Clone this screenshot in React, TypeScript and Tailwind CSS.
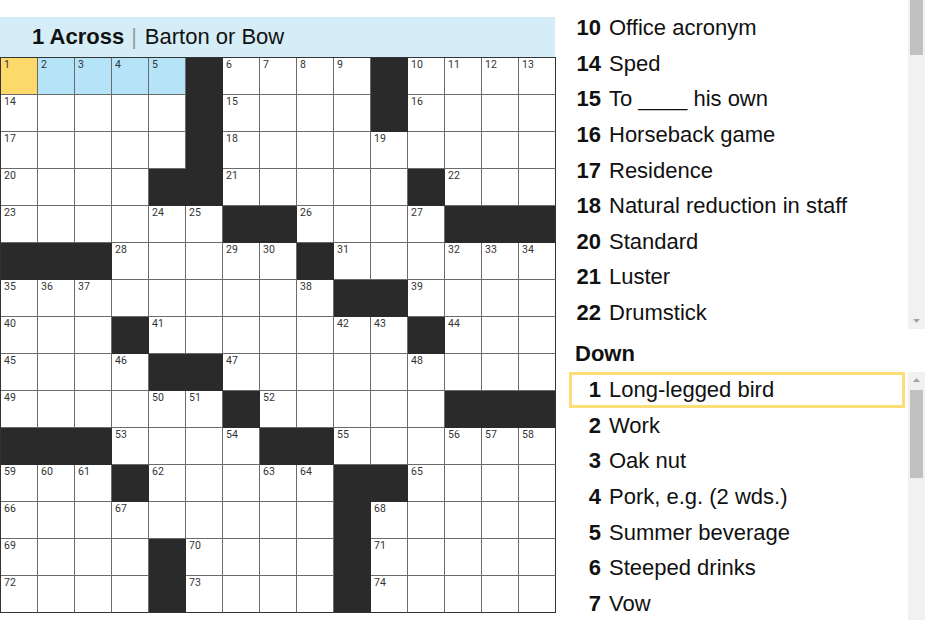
import React from 'react';

// 15x15 layout, '#' marks a block
const LAYOUT = [
  '.....#....#....',
  '.....#....#....',
  '.....#.........',
  '....##.....#...',
  '......##....###',
  '###.....#......',
  '.........##....',
  '...#.......#...',
  '....##.........',
  '......#.....###',
  '###....##......',
  '...#.....##....',
  '.........#.....',
  '....#....#.....',
  '....#....#.....',
];

type Cell = { block: boolean; num: number | null };

const buildGrid = (): Cell[][] => {
  let n = 0;
  return LAYOUT.map((row, r) =>
    row.split('').map((ch, c) => {
      if (ch === '#') return { block: true, num: null };
      const white = (rr: number, cc: number) =>
        rr >= 0 && cc >= 0 && rr < 15 && cc < 15 && LAYOUT[rr][cc] !== '#';
      const across = !white(r, c - 1) && white(r, c + 1);
      const down = !white(r - 1, c) && white(r + 1, c);
      return { block: false, num: across || down ? ++n : null };
    })
  );
};

const GRID = buildGrid();

const ACROSS = [
  { num: 10, text: 'Office acronym' },
  { num: 14, text: 'Sped' },
  { num: 15, text: 'To ____ his own' },
  { num: 16, text: 'Horseback game' },
  { num: 17, text: 'Residence' },
  { num: 18, text: 'Natural reduction in staff' },
  { num: 20, text: 'Standard' },
  { num: 21, text: 'Luster' },
  { num: 22, text: 'Drumstick' },
];

const DOWN = [
  { num: 1, text: 'Long-legged bird' },
  { num: 2, text: 'Work' },
  { num: 3, text: 'Oak nut' },
  { num: 4, text: 'Pork, e.g. (2 wds.)' },
  { num: 5, text: 'Summer beverage' },
  { num: 6, text: 'Steeped drinks' },
  { num: 7, text: 'Vow' },
];

const cellClass = (cell: Cell, r: number, c: number) => {
  if (cell.block) return 'bg-[#2a2a2a] border-[#2a2a2a]';
  if (r === 0 && c === 0) return 'bg-[#fdd86b] border-[#6b6b6b]';
  if (r === 0 && c < 5) return 'bg-[#b5e3f8] border-[#6b6b6b]';
  return 'bg-white border-[#6b6b6b]';
};

const ClueRow: React.FC<{ num: number; text: string; active?: boolean }> = ({ num, text, active }) => (
  <div
    className={
      active
        ? 'ml-[9px] mr-[3px] h-[35.6px] flex items-center border-[3px] border-[#fcdd78]'
        : 'ml-[9px] mr-[3px] h-[35.6px] flex items-center border-[3px] border-transparent'
    }
  >
    <span className="w-[29px] shrink-0 text-right font-bold">{num}</span>
    <span className="ml-[8px] whitespace-nowrap">{text}</span>
  </div>
);

const Scrollbar: React.FC<{ up?: boolean; thumbTop: number; thumbHeight: number }> = ({ up, thumbTop, thumbHeight }) => (
  <div className="w-[17px] shrink-0 bg-[#f1f1f1] flex flex-col items-center">
    {up && (
      <svg width="17" height="17" viewBox="0 0 17 17" className="shrink-0">
        <path d="M5 10 L8.5 6 L12 10 Z" fill="#a3a3a3" />
      </svg>
    )}
    <div className="w-[13px] bg-[#c1c1c1] shrink-0" style={{ marginTop: thumbTop, height: thumbHeight }} />
    <div className="flex-1" />
    {!up && (
      <svg width="17" height="17" viewBox="0 0 17 17" className="shrink-0">
        <path d="M5 7 L12 7 L8.5 11 Z" fill="#a3a3a3" />
      </svg>
    )}
  </div>
);

export default function App() {
  return (
    <div className="flex w-[930px] h-[620px] overflow-hidden bg-white text-[#111] font-['Liberation_Sans',Arial,sans-serif]">
      {/* Board */}
      <div className="w-[556px] shrink-0 pt-[17px]">
        <div className="h-[40px] w-[555px] bg-[#d5edf7] flex items-center pl-[32px] pb-[2px] text-[22px]">
          <span className="font-bold">1 Across</span>
          <span className="ml-[7px] mr-[8px] text-[#9c9c9c] font-light">|</span>
          <span>Barton or Bow</span>
        </div>
        <div className="grid grid-cols-[repeat(15,37px)] w-[556px] border-l border-t border-[#333]">
          {GRID.map((row, r) =>
            row.map((cell, c) => (
              <div
                key={`${r}-${c}`}
                className={`w-[37px] h-[37px] border-r border-b pl-[3px] pt-[2px] text-[10.5px] leading-none text-[#333] font-['Roboto',sans-serif] ${cellClass(cell, r, c)} ${c === 14 ? 'border-r-[#333]' : ''} ${r === 14 ? 'border-b-[#333]' : ''}`}
              >
                {cell.num}
              </div>
            ))
          )}
        </div>
      </div>

      {/* Clue lists */}
      <div className="w-[370px] ml-[4px] flex flex-col text-[22px]">
        <div className="h-[329px] flex shrink-0 mr-[5px]">
          <div className="flex-1 overflow-hidden pt-[10px]">
            {ACROSS.map((cl) => (
              <ClueRow key={cl.num} num={cl.num} text={cl.text} />
            ))}
          </div>
          <Scrollbar thumbTop={0} thumbHeight={55} />
        </div>

        <div className="h-[43px] shrink-0 pl-[15px] pt-[8px] font-bold">Down</div>

        <div className="flex-1 flex mr-[5px] min-h-0">
          <div className="flex-1 overflow-hidden">
            {DOWN.map((cl, i) => (
              <ClueRow key={cl.num} num={cl.num} text={cl.text} active={i === 0} />
            ))}
          </div>
          <Scrollbar up thumbTop={1} thumbHeight={88} />
        </div>
      </div>
    </div>
  );
}
